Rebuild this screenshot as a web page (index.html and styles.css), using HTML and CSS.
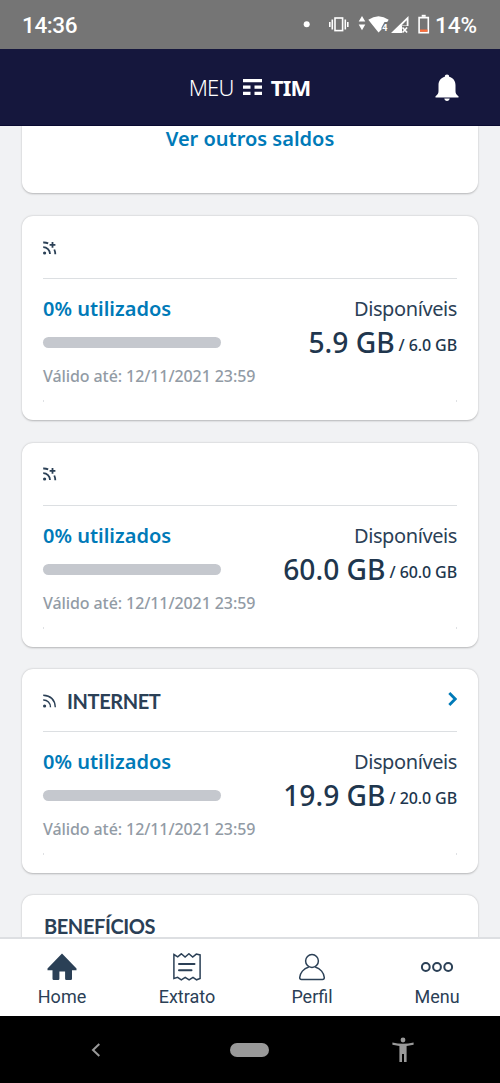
FILE: index.html
```html
<!DOCTYPE html>
<html lang="pt-BR">
<head>
<meta charset="utf-8">
<title>Meu TIM</title>
<link rel="stylesheet" href="styles.css">
</head>
<body>
<div class="screen">
  <div class="status">
    <span class="clock">14:36</span>
    <svg class="status-icons" width="128" height="30" viewBox="300 10 128 30">
      <circle cx="306.7" cy="24.3" r="3" fill="#fff"/>
      <g fill="none" stroke="#fff" stroke-width="1.6">
        <rect x="335" y="18" width="7.6" height="12.6"/>
        <path d="M332.3 19.5v10M345.3 19.5v10M329.8 22v5M347.8 22v5"/>
      </g>
      <g fill="#fff">
        <path d="M362 16l3.3 5.6h-6.6zM362 30.3l3.3-5.8h-6.6z"/>
        <path d="M368.3 19.8Q378.500 12.600 388.700 19.800L387.200 22H384.500L381.500 27.500V29.500L378.500 32.500z"/>
        <path fill-rule="evenodd" d="M408.500 16V26h-6.500v7H391zM406.700 20.300L401.500 25.500H406.700z"/>
      </g>
      <text x="382.300" y="31" class="wifi-tag">4</text>
      <path d="M402.500 27.500l4.600 5M407.100 27.500l-4.600 5" stroke="#fff" stroke-width="1.600"/>
      <path d="M419.100 17.600h9.200v15h-9.200z" fill="none" stroke="#fff" stroke-width="1.600"/>
      <path d="M421.700 15.800h4" stroke="#fff" stroke-width="2"/>
      <path d="M420 29.500h7.500v2.300H420z" fill="#ff6f3c"/>
    </svg>
    <span class="battery">14%</span>
  </div>

  <header class="header">
    <div class="logo">
      <span class="logo-meu">MEU</span>
      <svg width="19" height="16" viewBox="0 0 19 16" fill="#fff">
        <path d="M0 0h19v3.300H0zM0 6.500h7.500v3.300H0zM11.500 6.500H19v3.300h-7.500zM0 12.700h7.500V16H0zM11.500 12.700H19V16h-7.500z"/>
      </svg>
      <span class="logo-tim">TIM</span>
    </div>
    <svg class="bell" width="24" height="28" viewBox="0 0 24 28" fill="#fff">
      <path d="M12 0.500c1.300 0 2.200.9 2.200 2.200 4 1 6.300 4.300 6.300 8.500v5.800c0 2.200.6 3.500 3 5.300v1.200H.5v-1.200c2.400-1.800 3-3.100 3-5.300v-5.800c0-4.200 2.300-7.500 6.300-8.500 0-1.300.9-2.200 2.200-2.200zM9.300 24.600h5.400c-.2 1.600-1.200 2.500-2.700 2.500s-2.500-.9-2.700-2.500z"/>
    </svg>
  </header>

  <main class="content">
    <section class="card card-link"><a class="more">Ver outros saldos</a></section>

    <section class="card">
      <div class="card-head">
        <svg width="14" height="14" viewBox="0 0 14 14" class="feed">
          <circle cx="1.600" cy="12" r="1.600" class="dot"/>
          <path d="M.2 6.200a6.800 6.800 0 0 1 6.800 6.800M.2 1.500q2.800-.1 5 .9M11.300 8.500q.9 2 1 4.700M9.500 1v5.800M6.600 3.900h5.800"/>
        </svg>
      </div>
      <div class="usage">
        <div class="used"><b class="percent">0% utilizados</b><div class="bar"></div><span class="valid">Válido até: 12/11/2021 23:59</span></div>
        <div class="left"><span class="label">Disponíveis</span><div class="amount"><span class="big">5.9 GB</span><span class="total">/ 6.0 GB</span></div></div>
      </div>
      <div class="ticks"></div>
    </section>

    <section class="card">
      <div class="card-head">
        <svg width="14" height="14" viewBox="0 0 14 14" class="feed">
          <circle cx="1.600" cy="12" r="1.600" class="dot"/>
          <path d="M.2 6.200a6.800 6.800 0 0 1 6.800 6.800M.2 1.500q2.800-.1 5 .9M11.300 8.500q.9 2 1 4.700M9.500 1v5.800M6.600 3.900h5.800"/>
        </svg>
      </div>
      <div class="usage">
        <div class="used"><b class="percent">0% utilizados</b><div class="bar"></div><span class="valid">Válido até: 12/11/2021 23:59</span></div>
        <div class="left"><span class="label">Disponíveis</span><div class="amount"><span class="big">60.0 GB</span><span class="total">/ 60.0 GB</span></div></div>
      </div>
      <div class="ticks"></div>
    </section>

    <section class="card">
      <div class="card-head">
        <svg width="14" height="14" viewBox="0 0 14 14" class="feed feed-thin">
          <circle cx="1.600" cy="12" r="1.600" class="dot"/>
          <path d="M.2 6a7 7 0 0 1 7.300 7.300M.2 1.200q11.600.6 12.100 12.100"/>
        </svg>
        <h2 class="title">INTERNET</h2>
        <svg class="chevron" width="9" height="14" viewBox="0 0 9 14"><path d="M1.300 1L7.200 7l-5.900 6"/></svg>
      </div>
      <div class="usage">
        <div class="used"><b class="percent">0% utilizados</b><div class="bar"></div><span class="valid">Válido até: 12/11/2021 23:59</span></div>
        <div class="left"><span class="label">Disponíveis</span><div class="amount"><span class="big">19.9 GB</span><span class="total">/ 20.0 GB</span></div></div>
      </div>
      <div class="ticks"></div>
    </section>

    <section class="card card-benefits"><h2 class="title">BENEFÍCIOS</h2></section>
  </main>

  <nav class="tabs">
    <a class="tab">
      <svg width="30" height="28" viewBox="0 0 30 28" fill="#2b4056"><path d="M15 .5L29.500 15.500v1.800H25v8.500q0 1.200-1.200 1.200h-4.500q-1.200 0-1.200-1.200V18.500h-5.700v7.300q0 1.200-1.200 1.200H6.700q-1.200 0-1.200-1.200v-8.500H.5v-1.800z"/></svg>
      <span>Home</span>
    </a>
    <a class="tab">
      <svg width="30" height="28" viewBox="0 0 30 28" class="line"><path d="M1.900 1.500l3.800 2.300 3.600-3 3.800 3.300 3.800-3.300 3.800 3.300 3.600-3 3.800 .8v23.500l-3.500 1.400-3.600-2.500-3.900 2.600-3.900-2.600-3.900 2.600-3.700-2.500-3.700 1z"/><path d="M7 11h15.500M7 17.300h12.500" class="rule"/></svg>
      <span>Extrato</span>
    </a>
    <a class="tab">
      <svg width="30" height="28" viewBox="0 0 30 28" class="line"><circle cx="15" cy="8" r="6.400"/><path d="M11.800 14C6.500 15.500 3 20 2.700 24.500q0 2 1.800 2h21q1.800 0 1.800-2C27 20 23.500 15.500 18.200 14"/></svg>
      <span>Perfil</span>
    </a>
    <a class="tab">
      <svg width="34" height="28" viewBox="0 0 34 28" class="line dots"><circle cx="5.800" cy="14" r="3.900"/><circle cx="17" cy="14" r="3.900"/><circle cx="28.200" cy="14" r="3.900"/></svg>
      <span>Menu</span>
    </a>
  </nav>

  <div class="system">
    <svg width="10" height="14" viewBox="0 0 10 14" fill="none" stroke="#999" stroke-width="2"><path d="M8.300 1L2 7l6.300 6"/></svg>
    <div class="pill"></div>
    <svg width="22" height="26" viewBox="0 0 22 26" fill="#999"><circle cx="11" cy="3" r="2.400"/><path d="M.4 5.500Q11 8.200 21.600 5.500V7.800L14.600 9V25H12V17h-2v8H7.400V9L.4 7.800z"/></svg>
  </div>
</div>
</body>
</html>
```

FILE: styles.css
```css
* { box-sizing: border-box; }
body { margin: 0; background: #000; font-family: "Noto Sans", sans-serif; color: #2b4056; }
.screen { width: 500px; height: 1083px; display: flex; flex-direction: column; overflow: hidden; }
svg { display: block; flex: none; }

.status { height: 49px; flex: none; background: #757575; color: #fff; display: flex; align-items: center; padding: 1px 0 0 22px; font: 500 22.5px/28px Roboto, sans-serif; }
.clock { width: 278px; letter-spacing: -.4px; }
.status-icons { overflow: visible; }
.wifi-tag { font: 700 9px Roboto, sans-serif; letter-spacing: 0; fill: #fff; }
.battery { margin-left: 7px; letter-spacing: -.1px; }

.header { height: 77px; flex: none; background: #15173d; border-bottom: 1px solid #090a31; display: grid; grid-template-columns: 1fr auto 1fr; align-items: center; color: #fff; }
.logo { grid-column: 2; display: flex; align-items: center; gap: 9px; margin: -1px 1px 0 0; font-size: 22px; line-height: 28px; }
.logo-meu { font-weight: 300; letter-spacing: -.7px; }
.logo-tim { font-weight: 700; letter-spacing: -.8px; }
.bell { justify-self: end; margin: 2px 41px 0 0; }

.content { height: 811px; flex: none; background: #f1f2f4; overflow: hidden; padding: 0 22px; display: flex; flex-direction: column; gap: 22.300px; }
.card { height: 204px; flex: none; background: #fff; border-radius: 11px; box-shadow: 0 .5px 2px rgba(0,0,0,.25); padding: 0 21px; }
.card-link { height: 67px; margin-bottom: 1.200px; border-radius: 0 0 11px 11px; text-align: center; }
.more { display: block; font-weight: 600; font-size: 20px; line-height: 25px; color: #007ab8; }
.card-head { height: 63px; border-bottom: 1px solid #dcdfe2; display: flex; align-items: center; }
.feed { margin-top: 1px; fill: none; stroke: #2b4056; stroke-width: 1.800; }
.feed-thin { stroke-width: 1.400; }
.dot { fill: #2b4056; stroke: none; }
.title { margin: 1px 0 0 10px; font: 700 20px/24px Lato, sans-serif; letter-spacing: -.4px; }
.chevron { margin: -3px 0 0 auto; fill: none; stroke: #007ab8; stroke-width: 2.800; }
.usage { display: flex; justify-content: space-between; padding-top: 16px; }
.percent { display: block; font-weight: 600; font-size: 20px; line-height: 28px; color: #007ab8; }
.bar { width: 178px; height: 11px; margin: 14px 0 13px; border-radius: 6px; background: #c5c8ce; }
.used { width: 220px; white-space: nowrap; }
.valid { display: block; font-size: 16px; line-height: 40px; margin-top: -5px; font-weight: 500; letter-spacing: -.09px; color: #929ba5; }
.left { text-align: right; }
.label { display: block; font-size: 20px; line-height: 28px; letter-spacing: -.4px; }
.amount { display: flex; align-items: baseline; justify-content: flex-end; gap: 4px; white-space: nowrap; font-weight: 500; line-height: 38px; color: #20364d; }
.big { font-size: 28.200px; }
.total { font-size: 16px; letter-spacing: -.1px; position: relative; top: -2px; }
.ticks { height: 2px; margin-top: 4px; border: solid #dfe1e4; border-width: 0 1px; }
.card-benefits { height: 100px; padding: 18px 12px; }

.tabs { height: 79px; flex: none; background: #fff; border-top: 2px solid #dddfe2; display: grid; grid-template-columns: repeat(4, 125px); }
.tab { display: flex; flex-direction: column; align-items: center; padding: 14px 1px 0 0; font: 400 18px/26px Roboto, sans-serif; }
.tab span { margin-top: 2.500px; }
.line { fill: none; stroke: #2b4056; stroke-width: 1.500; }
.rule { stroke-width: 2; stroke-linecap: round; }
.dots { stroke-width: 2; }
.system { flex: 1; background: #000; display: flex; align-items: center; padding-left: 91px; }
.pill { width: 39px; height: 14px; border-radius: 7px; background: #999; margin: 0 123px 0 129px; }
```
